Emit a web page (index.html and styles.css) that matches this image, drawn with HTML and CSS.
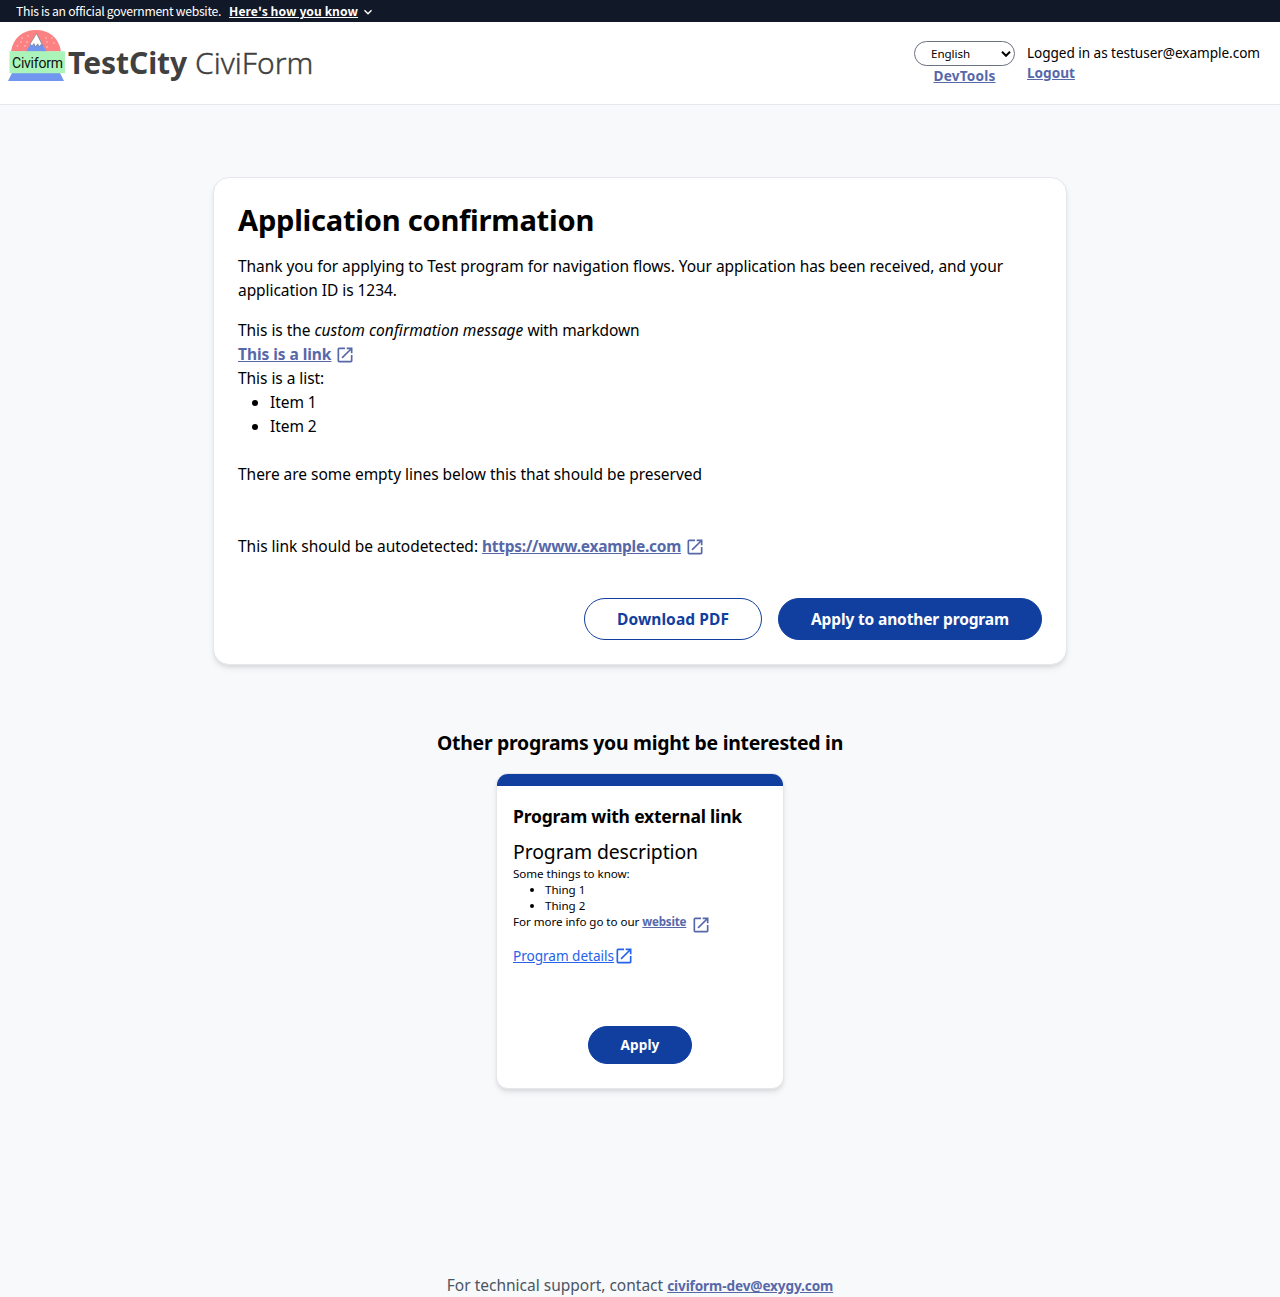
FILE: index.html
```html
<!DOCTYPE html>
<html lang="en">
<head>
<meta charset="utf-8">
<title>Application confirmation</title>
<link rel="stylesheet" href="styles.css">
</head>
<body>
<svg width="0" height="0" class="sprite" aria-hidden="true">
  <symbol id="open-in-new" viewBox="0 0 24 24"><path d="M19 19H5V5h7V3H5a2 2 0 0 0-2 2v14a2 2 0 0 0 2 2h14c1.1 0 2-.9 2-2v-7h-2v7zM14 3v2h3.590l-9.830 9.830 1.410 1.410L19 6.410V10h2V3h-7z"/></symbol>
</svg>
<div class="gov-banner">
  <span class="gov-text">This is an official government website.</span>
  <a class="gov-link" href="#">Here's how you know</a>
  <svg class="chevron" viewBox="0 0 24 24"><path d="M16.590 8.590 12 13.170 7.410 8.590 6 10l6 6 6-6z"/></svg>
</div>
<header class="header">
  <div class="brand">
    <svg class="logo" viewBox="0 0 58 52">
      <path fill="#fc8182" d="M3 21.500C5 8 14.500 0 28 0s23 8 25 21.500z"/>
      <path fill="#7196ef" d="M18 21.500 28.500 3.500 38.500 21.500z"/>
      <path fill="#fff" stroke="#666" stroke-width=".5" d="m28.500 3.500-6.300 10.300 1.600 2.200 2.200-2.500 1.500 3.500 2.200-3.200 1.500 3 1.600-2.300 1.700.8z"/>
      <g fill="#ffdcdc"><circle cx="20" cy="6" r=".7"/><circle cx="14" cy="8" r=".7"/><circle cx="19" cy="12" r=".7"/><circle cx="13" cy="12" r=".7"/><circle cx="9.500" cy="16" r=".7"/><circle cx="17" cy="16" r=".7"/><circle cx="38" cy="8" r=".7"/><circle cx="44" cy="8" r=".7"/><circle cx="39" cy="12" r=".7"/><circle cx="46" cy="13" r=".7"/><circle cx="39" cy="17" r=".7"/></g>
      <path fill="#7196ef" d="M4 43h48l4 8H0z"/>
      <path fill="#aaf4b9" d="M1.500 21.300H57v22H1.500z"/>
      <text x="4" y="37.500" class="logo-text" textLength="51">Civiform</text>
    </svg>
    <div class="brand-name"><b>TestCity</b><span class="brand-sub">CiviForm</span></div>
  </div>
  <div class="account">
    <div class="tools">
      <div class="select"><span>English</span><svg class="select-arrow" viewBox="0 0 10 6"><path d="m1 .8 4 4 4-4"/></svg></div>
      <a class="link devtools" href="#">DevTools</a>
    </div>
    <div class="session">
      <span class="who">Logged in as testuser@example.com</span>
      <a class="link logout" href="#">Logout</a>
    </div>
  </div>
</header>
<main class="main">
  <section class="confirm">
    <h1>Application confirmation</h1>
    <p class="thanks">Thank you for applying to Test program for navigation flows. Your application has been received, and your <br>application ID is 1234.</p>
    <div class="message">
      <p>This is the <em class="custom">custom confirmation message</em> <span class="with">with markdown</span></p>
      <p><a class="link" href="#">This is a link</a><svg class="ext"><use href="#open-in-new"/></svg></p>
      <p>This is a list:</p>
      <ul><li>Item 1</li><li>Item 2</li></ul>
      <p class="preserved">There are some empty lines below this that should be preserved</p>
      <p class="auto">This link should be autodetected: <a class="link url" href="#">https://www.example.com</a><svg class="ext"><use href="#open-in-new"/></svg></p>
    </div>
    <div class="actions">
      <button class="btn outline">Download PDF</button>
      <button class="btn solid">Apply to another program</button>
    </div>
  </section>
  <h2>Other programs you might be interested in</h2>
  <article class="card">
    <div class="card-bar"></div>
    <div class="card-body">
      <h3>Program with external link</h3>
      <div class="card-lead">Program description</div>
      <div class="card-copy">
        <p>Some things to know:</p>
        <ul><li>Thing 1</li><li>Thing 2</li></ul>
        <p class="more"><span>For more info go to our</span> <a class="link" href="#">website</a><svg class="ext"><use href="#open-in-new"/></svg></p>
      </div>
      <a class="details" href="#"><span>Program details</span><svg class="ext"><use href="#open-in-new"/></svg></a>
      <button class="btn solid apply">Apply</button>
    </div>
  </article>
</main>
<footer class="footer">For technical support, contact <a class="link" href="#">civiform-dev@exygy.com</a></footer>
</body>
</html>
```
FILE: styles.css
```css
* { box-sizing: border-box; margin: 0; padding: 0; }
body { min-height: 1297px; display: flex; flex-direction: column; background: #f8f9fb; color: #000; font: 15.5px/24px "Noto Sans", "Open Sans", sans-serif; }
.sprite { display: none; }
ul { padding-left: 32px; }
.link { color: #5768a9; font-weight: 700; text-decoration: underline; }
.ext { width: 20px; height: 20px; fill: #5768a9; flex: none; }

.gov-banner { height: 22px; padding-left: 16px; display: flex; align-items: center; background: #111827; color: #fff; font: 12.2px/16px "Noto Sans CJK JP", sans-serif; }
.gov-text { letter-spacing: -.0234em; }
.gov-link { margin-left: 8px; color: #fff; font-weight: 700; text-decoration: underline; letter-spacing: .0046em; }
.chevron { width: 16px; height: 16px; margin: 2px 0 0 2px; fill: #fff; }

.header { height: 83px; display: flex; justify-content: space-between; background: #fff; border-bottom: 1px solid #e5e7eb; }
.brand { display: flex; padding: 8px 0 0 8px; }
.logo { width: 58px; height: 52px; }
.logo-text { font: 14px Roboto, sans-serif; fill: #111; }
.brand-name { display: flex; gap: 8px; margin-left: 2px; padding-top: 15px; font-size: 30px; line-height: 36px; letter-spacing: -.002em; color: #404040; }
.brand-sub { font-weight: 300; letter-spacing: 0; -webkit-text-stroke: .4px #404040; }
.account { display: flex; gap: 12px; padding: 19px 20px 0 0; font-size: 13.6px; line-height: 20px; }
.tools { display: flex; flex-direction: column; align-items: center; }
.devtools { letter-spacing: .0154em; }
.select { width: 101px; height: 25px; padding: 0 3px 0 16px; display: flex; align-items: center; justify-content: space-between; border: 1px solid #6b7280; border-radius: 13px; font-size: 11.6px; letter-spacing: -.0056em; }
.select-arrow { width: 10px; height: 6px; fill: none; stroke: #000; stroke-width: 2; }
.session { width: 233px; display: flex; flex-direction: column; align-items: flex-start; padding-top: 2px; white-space: nowrap; }
.who { letter-spacing: -.0038em; }

.main { display: flex; flex-direction: column; align-items: center; padding-top: 72px; }
.confirm { width: 854px; height: 488px; padding: 24px; background: #fff; border: 1px solid #e5e7eb; border-radius: 16px; box-shadow: 0 4px 6px -1px rgba(0,0,0,.1), 0 2px 4px -1px rgba(0,0,0,.06); }
h1 { font-size: 29.1px; line-height: 36px; margin-bottom: 16px; letter-spacing: -.0085em; }
.thanks { margin-bottom: 16px; white-space: nowrap; letter-spacing: -.0035em; }
.message { letter-spacing: -.0035em; }
.custom { letter-spacing: .0038em; }
.message .with { letter-spacing: -.0081em; }
.message .auto { letter-spacing: -.0013em; }
.message .url { letter-spacing: -.0168em; }
.confirm .ext { margin-left: 4px; vertical-align: -5px; }
.message p { height: 24px; }
.message ul { margin-bottom: 24px; }
.message .preserved { margin-bottom: 48px; letter-spacing: -.0022em; }
.actions { display: flex; justify-content: flex-end; gap: 16px; margin-top: 40px; }
.btn { height: 42px; border: 1px solid #113f9f; border-radius: 21px; font: 700 15.5px/24px "Noto Sans", sans-serif; white-space: nowrap; }
.outline { width: 178px; color: #113f9f; background: #fff; letter-spacing: .0055em; }
.solid { width: 264px; color: #fff; background: #113f9f; letter-spacing: -.0087em; }

h2 { margin: 64px 0 16px; font-size: 19.4px; line-height: 28px; letter-spacing: -.0132em; }
.card { width: 288px; height: 316px; background: #fff; border: 1px solid #e5e7eb; border-radius: 12px; overflow: hidden; box-shadow: 0 4px 6px -1px rgba(0,0,0,.1), 0 2px 4px -1px rgba(0,0,0,.06); }
.card-bar { height: 12px; background: #113f9f; }
.card-body { height: 302px; display: flex; flex-direction: column; padding: 16px 16px 24px; }
h3 { font-size: 17.5px; line-height: 28px; margin-bottom: 8px; letter-spacing: -.011em; }
.card-lead { font-size: 19.4px; line-height: 28px; letter-spacing: -.0049em; }
.card-copy { font-size: 11.6px; line-height: 16px; letter-spacing: -.004em; }
.card-copy .more { height: 24px; display: flex; gap: 3px; }
.more .link { letter-spacing: -.0165em; }
.more .ext { margin: 1px 0 0 2px; }
.details { display: flex; align-items: center; margin-top: 8px; color: #2563eb; font-size: 13.6px; line-height: 20px; letter-spacing: -.0022em; text-decoration: none; }
.details span { text-decoration: underline; }
.details .ext { fill: #2563eb; }
.btn.apply { width: 104px; height: 38px; margin: auto auto 0; font-size: 13.6px; line-height: 20px; letter-spacing: .0087em; }

.footer { margin-top: auto; height: 24px; text-align: center; color: #4b5563; }
.footer .link { font-size: 13.6px; letter-spacing: -.0087em; }
```
